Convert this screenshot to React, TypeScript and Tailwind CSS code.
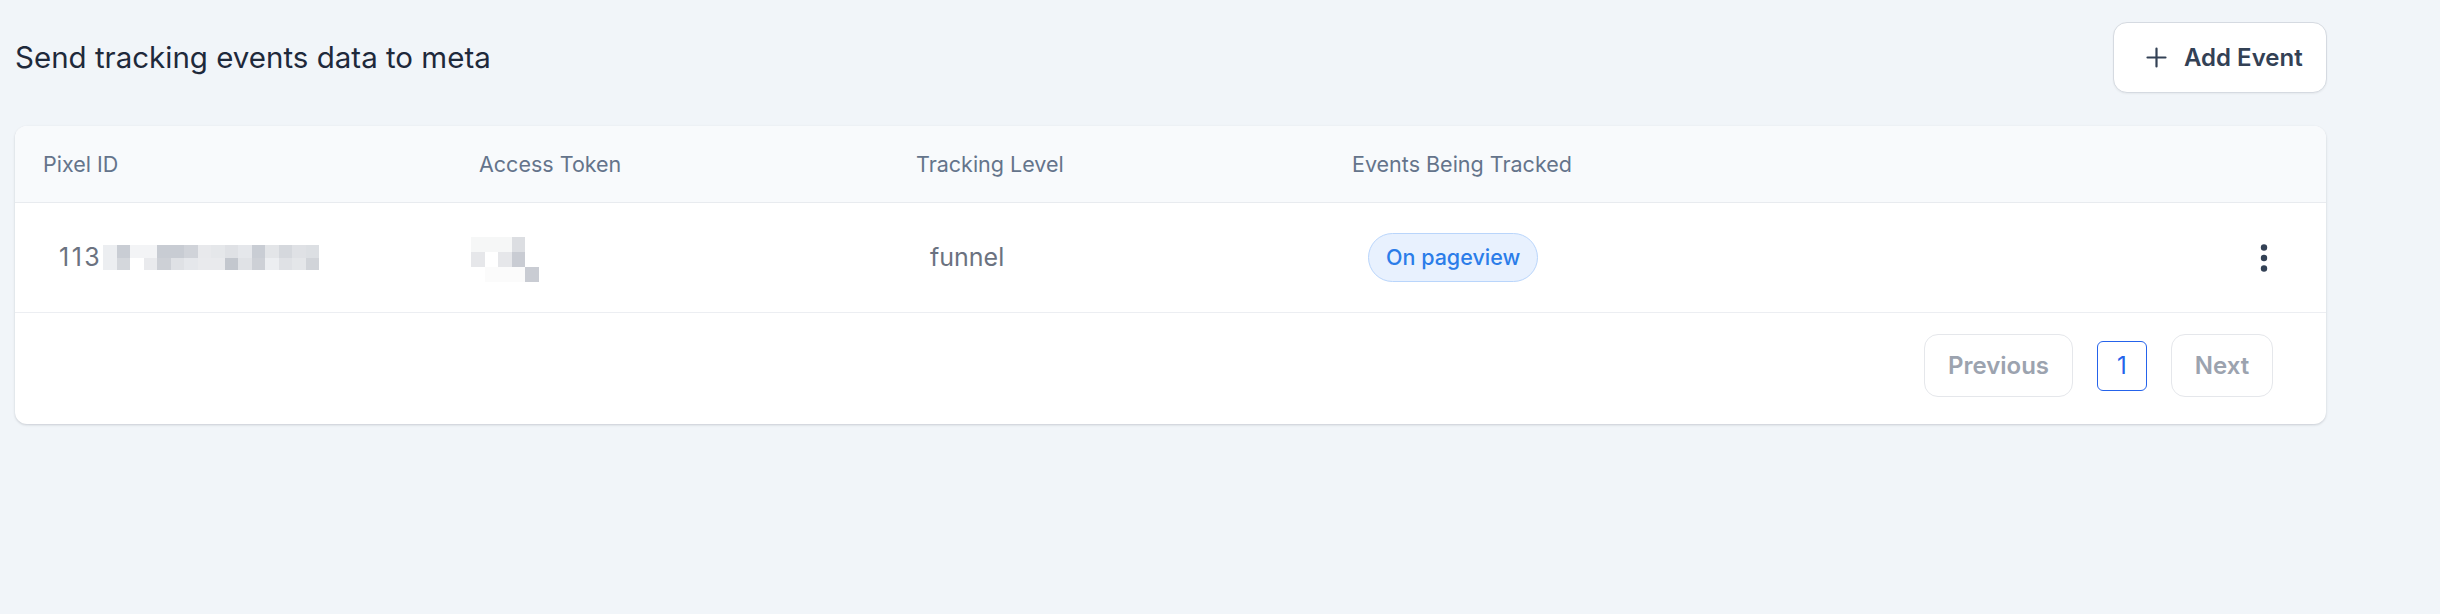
import React from "react";

// Redaction mosaic cells: each row is a list of colours ("" = empty cell)
const pixelIdMosaic: string[][] = [
  ["#eceef1", "#c9cdd4", "#f3f4f6", "#f3f4f6", "#c8ccd3", "#c8ccd3", "#d0d3d9", "#e8e9ec", "#e5e7ea", "#dfe1e5", "#e5e7eb", "#c9cdd4", "#e3e5e8", "#d5d8dd", "#dfe1e5", "#dcdfe3"],
  ["#eceef1", "#d4d7dc", "#ffffff", "#e9eaed", "#cdd0d6", "#dfe1e5", "#e5e7eb", "#e9eaed", "#e9eaed", "#c3c7ce", "#e0e2e6", "#cdd0d6", "#eceef1", "#dfe1e5", "#e4e6e9", "#d1d4d9"],
];

const tokenMosaic: string[][] = [
  ["#f6f7f7", "#f6f7f7", "#f6f7f7", "#dcdee2", ""],
  ["#e6e7ea", "#ffffff", "#e6e7ea", "#c9ccd3", ""],
  ["", "#fbfbfb", "#fbfbfb", "#fbfbfb", "#c9ccd3"],
];

function Mosaic({ cells, size }: { cells: string[][]; size: "sm" | "md" }) {
  return (
    <div className="flex flex-col">
      {cells.map((row, r) => (
        <div key={r} className="flex">
          {row.map((c, i) => (
            <div
              key={i}
              className={size === "sm" ? "w-[13.5px] h-[12.5px]" : "w-[13.5px] h-[15px]"}
              style={{ backgroundColor: c || "transparent" }}
            />
          ))}
        </div>
      ))}
    </div>
  );
}

function Kebab() {
  return (
    <svg width="8" height="30" viewBox="0 0 8 30" className="block">
      <circle cx="4" cy="4.5" r="3.2" fill="#334155" />
      <circle cx="4" cy="15" r="3.2" fill="#334155" />
      <circle cx="4" cy="25.5" r="3.2" fill="#334155" />
    </svg>
  );
}

export default function App() {
  return (
    <div
      className="w-[2440px] h-[614px] bg-[#f1f5f9] pl-[15px] pt-[22px]"
      style={{ fontFamily: "Inter, 'Noto Sans', sans-serif" }}
    >
      <div className="w-[2312px]">
        {/* Title bar */}
        <div className="flex items-center justify-between h-[71px]">
          <h1 className="text-[29.5px] font-normal text-[#1e293b] leading-none">
            Send tracking events data to meta
          </h1>
          <button className="flex items-center h-[71px] w-[214px] rounded-[14px] border-[1.5px] border-[#d5dae1] bg-white pl-[32px] shadow-[0_1px_2px_rgba(0,0,0,0.05)]">
            <svg width="21" height="21" viewBox="0 0 21 21" className="mr-[17px]">
              <path d="M10.5 1.5v18M1.5 10.5h18" stroke="#334155" strokeWidth="2.2" strokeLinecap="round" />
            </svg>
            <span className="text-[24px] font-semibold text-[#334155] leading-none">Add Event</span>
          </button>
        </div>

        {/* Table card */}
        <div className="mt-[33px] w-[2311px] rounded-[12px] bg-white shadow-[0_1px_3px_rgba(15,23,42,0.12),0_1px_2px_rgba(15,23,42,0.06)] overflow-hidden">
          <div className="grid grid-cols-[436px_437px_436px_1fr] items-center h-[77px] pl-[28px] bg-[#f8fafc] border-b-[1.5px] border-[#e8ebef] text-[21.5px] text-[#64748b]">
            <div>Pixel ID</div>
            <div>Access Token</div>
            <div>Tracking Level</div>
            <div>Events Being Tracked</div>
          </div>

          <div className="grid grid-cols-[436px_437px_436px_1fr] items-center h-[110px] pl-[28px] border-b-[1.5px] border-[#eceef2] text-[24px] text-[#6b7280]">
            <div className="flex items-center pl-[16px]">
              <span className="text-[25px] tracking-[2.5px]">113</span>
              <div className="ml-[1px]">
                <Mosaic cells={pixelIdMosaic} size="sm" />
              </div>
            </div>
            <div className="-ml-[8px] pt-[3px]">
              <Mosaic cells={tokenMosaic} size="md" />
            </div>
            <div className="pl-[14px] text-[25px]">funnel</div>
            <div className="flex items-center justify-between pl-[16px] pr-[58px]">
              <span className="inline-flex items-center h-[49px] px-[17px] rounded-full border-[1.5px] border-[#b9d5fb] bg-[#e8f1fe] text-[21.5px] font-medium text-[#2b7de9]">
                On pageview
              </span>
              <Kebab />
            </div>
          </div>

          <div className="flex items-center justify-end h-[111px] pr-[53px] pb-[6px] gap-[24px]">
            <button className="h-[63px] w-[149px] rounded-[14px] border-[1.5px] border-[#e5e7eb] bg-white text-[24px] font-semibold text-[#9ca3af]">
              Previous
            </button>
            <button className="h-[50px] w-[50px] rounded-[6px] border-[1.5px] border-[#2563eb] bg-white text-[24px] text-[#2563eb]">
              1
            </button>
            <button className="h-[63px] w-[102px] rounded-[14px] border-[1.5px] border-[#e5e7eb] bg-white text-[24px] font-semibold text-[#9ca3af]">
              Next
            </button>
          </div>
        </div>
      </div>
    </div>
  );
}
